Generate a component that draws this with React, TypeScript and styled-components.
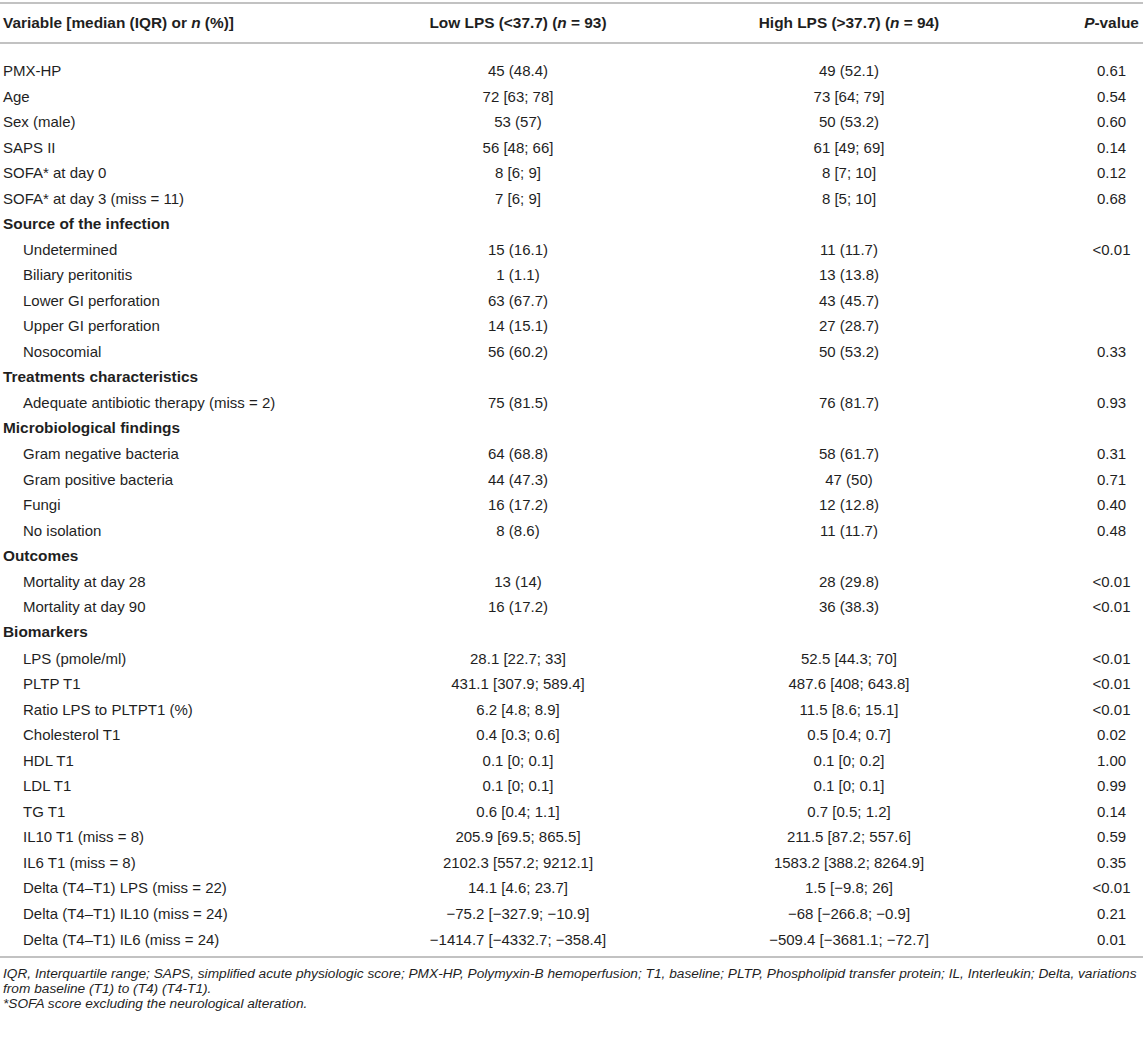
import React from "react";
import styled, { createGlobalStyle } from "styled-components";

const Global = createGlobalStyle`
  html, body { margin: 0; padding: 0; background: #ffffff; }
  body { font-family: "Liberation Sans", Arial, Helvetica, sans-serif; color: #1f1f1f; }
`;

const COLS = "418px 200px 462px 63px";

const Page = styled.div`
  width: 1143px;
  padding-top: 2px;
`;

const Table = styled.div`
  border-top: 2px solid #c2c2c2;
  border-bottom: 2px solid #c2c2c2;
`;

const HeaderRow = styled.div`
  display: grid;
  grid-template-columns: ${COLS};
  align-items: center;
  height: 38px;
  border-bottom: 2px solid #c2c2c2;
  font-weight: 700;
  font-size: 15.4px;
`;

const Body = styled.div`
  padding-top: 13.7px;
  padding-bottom: 4px;
`;

const Row = styled.div`
  display: grid;
  grid-template-columns: ${COLS};
  align-items: center;
  height: 25.56px;
  font-size: 15px;
`;

const Cell = styled.div<{ $align?: "left" | "center"; $indent?: boolean }>`
  text-align: ${(p) => (p.$align === "center" ? "center" : "left")};
  padding-left: ${(p) => (p.$indent ? "23px" : p.$align === "center" ? "0" : "3px")};
  white-space: nowrap;
`;

const GroupCell = styled.div`
  grid-column: 1 / -1;
  padding-left: 3px;
  font-weight: 700;
  font-size: 15.4px;
`;

const Notes = styled.div`
  padding: 8.5px 3px 0 3px;
  font-style: italic;
  font-size: 13.7px;
  line-height: 15px;
`;

type DataRow = { kind: "data"; label: string; a: string; b: string; p: string; indent?: boolean };
type GroupRow = { kind: "group"; label: string };
type R = DataRow | GroupRow;

const d = (label: string, a: string, b: string, p: string, indent = false): DataRow => ({
  kind: "data",
  label,
  a,
  b,
  p,
  indent,
});
const g = (label: string): GroupRow => ({ kind: "group", label });

const rows: R[] = [
  d("PMX-HP", "45 (48.4)", "49 (52.1)", "0.61"),
  d("Age", "72 [63; 78]", "73 [64; 79]", "0.54"),
  d("Sex (male)", "53 (57)", "50 (53.2)", "0.60"),
  d("SAPS II", "56 [48; 66]", "61 [49; 69]", "0.14"),
  d("SOFA* at day 0", "8 [6; 9]", "8 [7; 10]", "0.12"),
  d("SOFA* at day 3 (miss = 11)", "7 [6; 9]", "8 [5; 10]", "0.68"),
  g("Source of the infection"),
  d("Undetermined", "15 (16.1)", "11 (11.7)", "<0.01", true),
  d("Biliary peritonitis", "1 (1.1)", "13 (13.8)", "", true),
  d("Lower GI perforation", "63 (67.7)", "43 (45.7)", "", true),
  d("Upper GI perforation", "14 (15.1)", "27 (28.7)", "", true),
  d("Nosocomial", "56 (60.2)", "50 (53.2)", "0.33", true),
  g("Treatments characteristics"),
  d("Adequate antibiotic therapy (miss = 2)", "75 (81.5)", "76 (81.7)", "0.93", true),
  g("Microbiological findings"),
  d("Gram negative bacteria", "64 (68.8)", "58 (61.7)", "0.31", true),
  d("Gram positive bacteria", "44 (47.3)", "47 (50)", "0.71", true),
  d("Fungi", "16 (17.2)", "12 (12.8)", "0.40", true),
  d("No isolation", "8 (8.6)", "11 (11.7)", "0.48", true),
  g("Outcomes"),
  d("Mortality at day 28", "13 (14)", "28 (29.8)", "<0.01", true),
  d("Mortality at day 90", "16 (17.2)", "36 (38.3)", "<0.01", true),
  g("Biomarkers"),
  d("LPS (pmole/ml)", "28.1 [22.7; 33]", "52.5 [44.3; 70]", "<0.01", true),
  d("PLTP T1", "431.1 [307.9; 589.4]", "487.6 [408; 643.8]", "<0.01", true),
  d("Ratio LPS to PLTPT1 (%)", "6.2 [4.8; 8.9]", "11.5 [8.6; 15.1]", "<0.01", true),
  d("Cholesterol T1", "0.4 [0.3; 0.6]", "0.5 [0.4; 0.7]", "0.02", true),
  d("HDL T1", "0.1 [0; 0.1]", "0.1 [0; 0.2]", "1.00", true),
  d("LDL T1", "0.1 [0; 0.1]", "0.1 [0; 0.1]", "0.99", true),
  d("TG T1", "0.6 [0.4; 1.1]", "0.7 [0.5; 1.2]", "0.14", true),
  d("IL10 T1 (miss = 8)", "205.9 [69.5; 865.5]", "211.5 [87.2; 557.6]", "0.59", true),
  d("IL6 T1 (miss = 8)", "2102.3 [557.2; 9212.1]", "1583.2 [388.2; 8264.9]", "0.35", true),
  d("Delta (T4–T1) LPS (miss = 22)", "14.1 [4.6; 23.7]", "1.5 [−9.8; 26]", "<0.01", true),
  d("Delta (T4–T1) IL10 (miss = 24)", "−75.2 [−327.9; −10.9]", "−68 [−266.8; −0.9]", "0.21", true),
  d("Delta (T4–T1) IL6 (miss = 24)", "−1414.7 [−4332.7; −358.4]", "−509.4 [−3681.1; −72.7]", "0.01", true),
];

export default function App() {
  return (
    <Page>
      <Global />
      <Table>
        <HeaderRow>
          <Cell>
            Variable [median (IQR) or <i>n</i> (%)]
          </Cell>
          <Cell $align="center">
            Low LPS (&lt;37.7) (<i>n</i> = 93)
          </Cell>
          <Cell $align="center">
            High LPS (&gt;37.7) (<i>n</i> = 94)
          </Cell>
          <Cell $align="center">
            <i>P</i>-value
          </Cell>
        </HeaderRow>
        <Body>
          {rows.map((r, i) =>
            r.kind === "group" ? (
              <Row key={i}>
                <GroupCell>{r.label}</GroupCell>
              </Row>
            ) : (
              <Row key={i}>
                <Cell $indent={r.indent}>{r.label}</Cell>
                <Cell $align="center">{r.a}</Cell>
                <Cell $align="center">{r.b}</Cell>
                <Cell $align="center">{r.p}</Cell>
              </Row>
            )
          )}
        </Body>
      </Table>
      <Notes>
        IQR, Interquartile range; SAPS, simplified acute physiologic score; PMX-HP, Polymyxin-B hemoperfusion; T1,
        baseline; PLTP, Phospholipid transfer protein; IL, Interleukin; Delta, variations from baseline (T1) to (T4)
        (T4-T1).
        <br />
        *SOFA score excluding the neurological alteration.
      </Notes>
    </Page>
  );
}
